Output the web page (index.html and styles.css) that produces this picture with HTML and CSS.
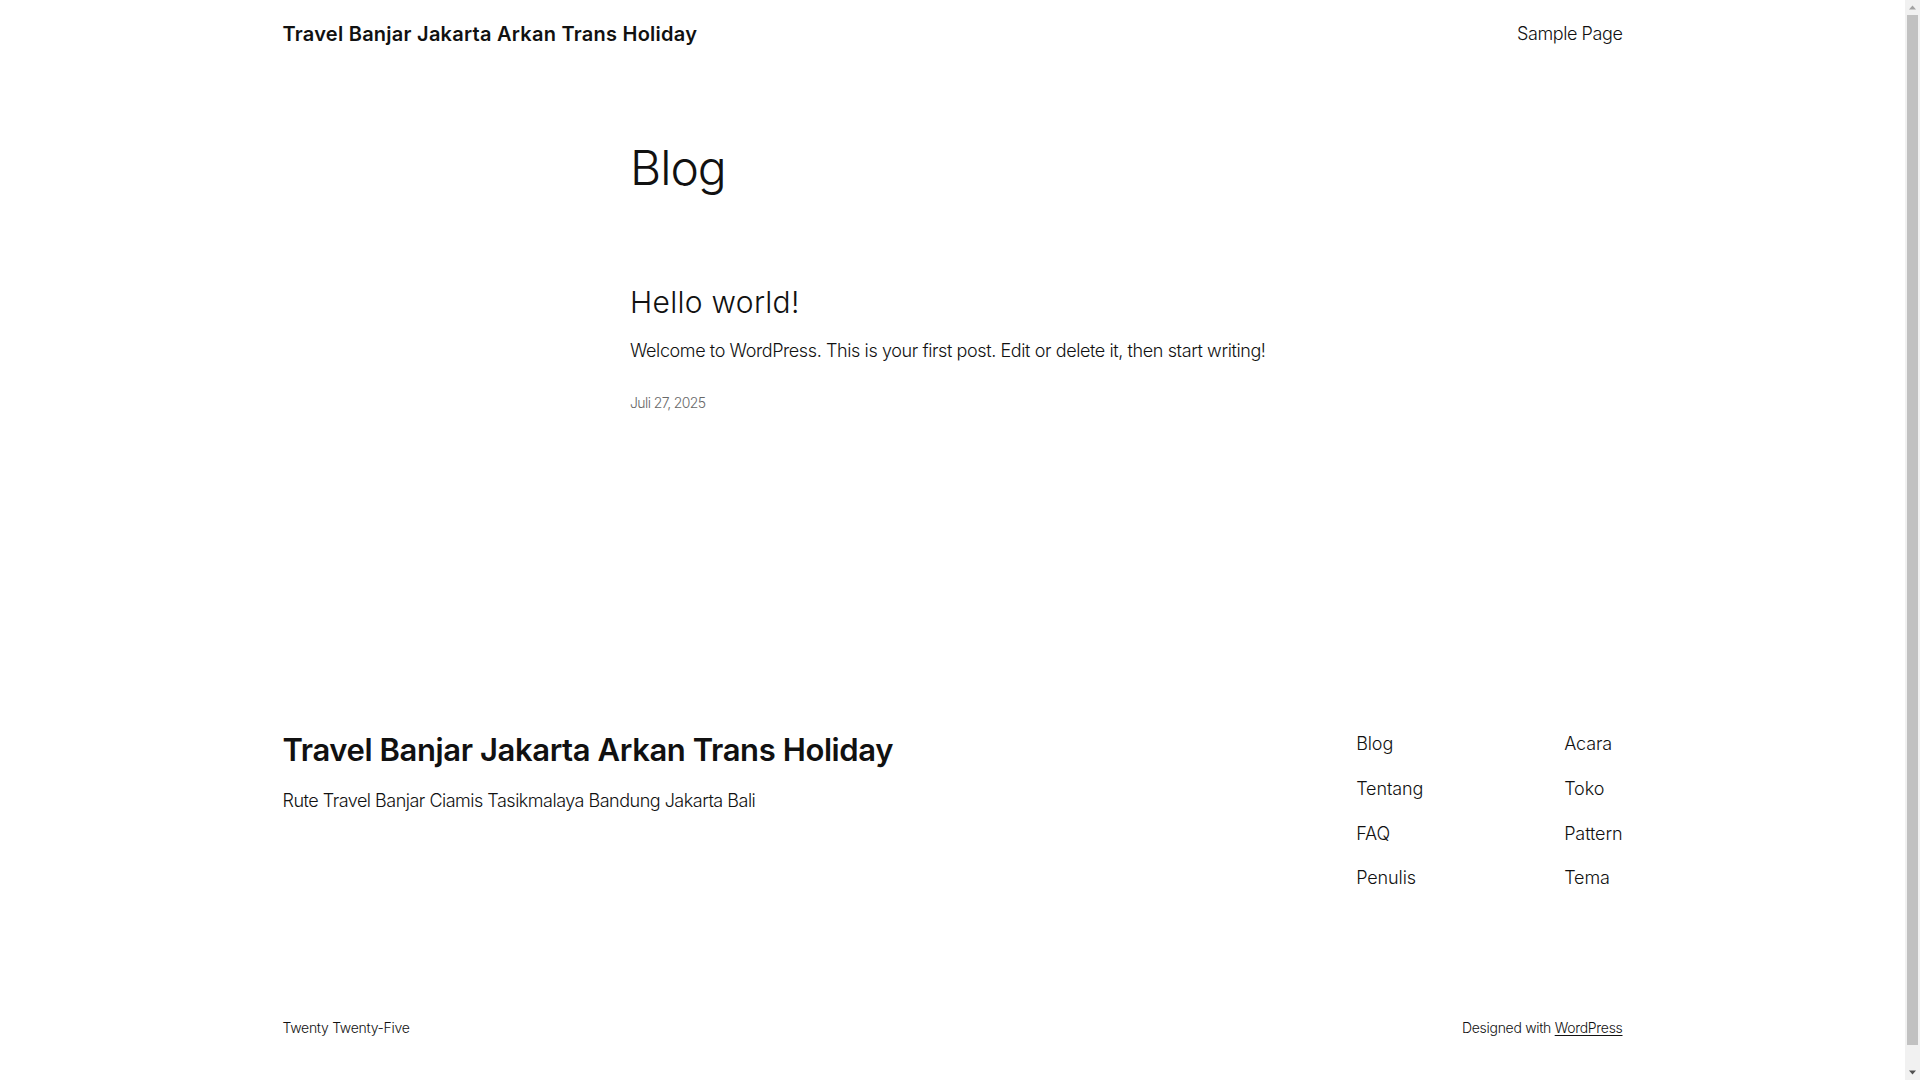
FILE: index.html
```html
<!doctype html>
<html lang="id">
<head>
  <meta charset="UTF-8">
  <title>Blog – Travel Banjar Jakarta Arkan Trans Holiday</title>
  <meta name="viewport" content="width=device-width, initial-scale=1">
  <link rel="stylesheet" href="styles.css">
</head>
<body>
  <header class="site-header">
    <div class="wide">
      <a href="#" class="site-title">Travel Banjar Jakarta Arkan Trans Holiday</a>
      <nav class="top-nav">
        <a href="#">Sample Page</a>
      </nav>
    </div>
  </header>

  <main class="content">
    <h1 class="page-title">Blog</h1>
    <article class="post">
      <h2 class="post-title"><a href="#">Hello world!</a></h2>
      <p class="excerpt">Welcome to WordPress. This is your first post. Edit or delete it, then start writing!</p>
      <time class="post-date" datetime="2025-07-27">Juli 27, 2025</time>
    </article>
  </main>

  <footer class="site-footer">
    <div class="wide footer-top">
      <div class="footer-brand">
        <a href="#" class="footer-title">Travel Banjar Jakarta Arkan Trans Holiday</a>
        <p class="tagline">Rute Travel Banjar Ciamis Tasikmalaya Bandung Jakarta Bali</p>
      </div>
      <nav class="footer-nav">
        <ul class="col">
          <li><a href="#">Blog</a></li>
          <li><a href="#">Tentang</a></li>
          <li><a href="#">FAQ</a></li>
          <li><a href="#">Penulis</a></li>
        </ul>
        <ul class="col">
          <li><a href="#">Acara</a></li>
          <li><a href="#">Toko</a></li>
          <li><a href="#">Pattern</a></li>
          <li><a href="#">Tema</a></li>
        </ul>
      </nav>
    </div>
    <div class="wide footer-bottom">
      <span>Twenty Twenty-Five</span>
      <span>Designed with <a href="#" class="wp-link">WordPress</a></span>
    </div>
  </footer>

  <!-- the window's scrollbar -->
  <div class="scrollbar" aria-hidden="true">
    <svg class="arrow" width="15" height="15" viewBox="0 0 15 15"><path d="M4 9.5 L7.5 5.5 L11 9.5 Z" fill="#a3a3a3"/></svg>
    <div class="thumb"></div>
    <svg class="arrow" width="15" height="15" viewBox="0 0 15 15"><path d="M4 5.5 L7.5 9.5 L11 5.5 Z" fill="#505050"/></svg>
  </div>
</body>
</html>
```

FILE: styles.css
```css
body { margin: 0 15px 0 0; background: #fff; color: #111; font-family: Inter, "Noto Sans", sans-serif; font-weight: 300; font-size: 18px; line-height: 1.6; letter-spacing: -0.4px; }
a { color: inherit; text-decoration: none; }
p, h1, h2, ul { margin: 0; padding: 0; }

.wide { width: 1340px; margin: 0 auto; }

/* header */
.site-header { padding: 22px 0; }
.site-header .wide { display: flex; justify-content: space-between; align-items: center; line-height: 24px; }
.site-title { font-weight: 600; font-size: 20px; letter-spacing: 0.25px; }
.top-nav a { font-size: 18px; }

/* posts */
.content { width: 645px; margin: 71px auto 0; }
.page-title { font-size: 48px; font-weight: 300; line-height: 1.2; letter-spacing: -1px; }
.post { margin-top: 87px; }
.post-title { font-size: 30px; font-weight: 300; line-height: 1.2; letter-spacing: 0.3px; }
.excerpt { margin-top: 17px; }
.post-date { display: block; margin-top: 28px; font-size: 14px; line-height: 1.4; color: #686868; letter-spacing: -0.6px; }

/* footer */
.site-footer { margin-top: 315px; padding-bottom: 60px; }
.footer-top { display: flex; justify-content: space-between; align-items: flex-start; }
.footer-title { display: block; font-size: 31px; font-weight: 600; line-height: 1.2; letter-spacing: -0.4px; margin-top: 3px; }
.tagline { margin-top: 19px; letter-spacing: -0.5px; }
.footer-nav { display: flex; letter-spacing: -0.1px; padding-top: 2px; }
.footer-nav .col { list-style: none; display: flex; flex-direction: column; gap: 16px; }
.footer-nav .col:first-child { width: 208px; }

.footer-bottom { display: flex; justify-content: space-between; margin-top: 125px; font-size: 14px; line-height: 1.4; letter-spacing: -0.3px; }
.wp-link { text-decoration: underline; text-underline-offset: 2px; }

.scrollbar { position: fixed; top: 0; right: 0; width: 15px; height: 100vh; background: #f1f1f1; display: flex; flex-direction: column; }
.scrollbar .arrow { flex: none; display: block; }
.scrollbar .thumb { flex: 1; margin: 0 2px 20px; background: #c1c1c1; }
```
